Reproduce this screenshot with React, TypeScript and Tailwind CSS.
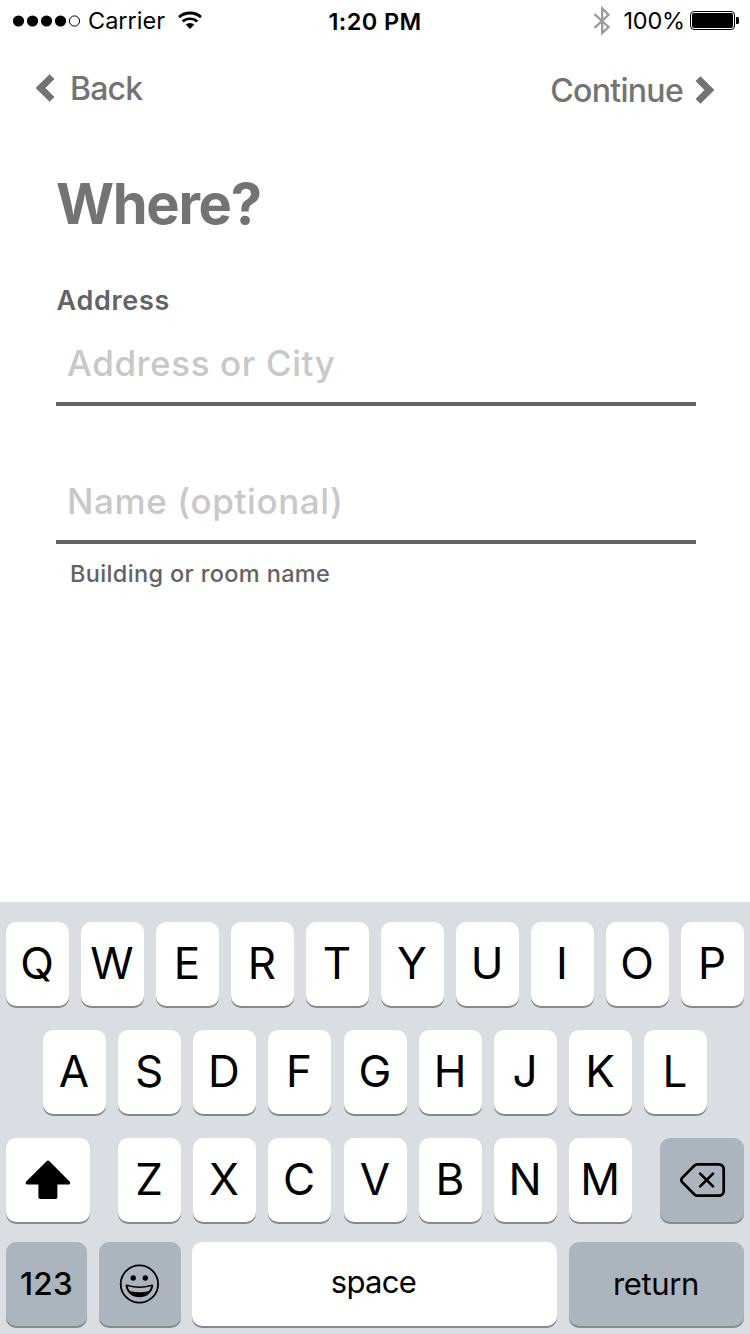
import type { ReactNode } from "react";

const rowOne = ["Q", "W", "E", "R", "T", "Y", "U", "I", "O", "P"];
const rowTwoLeft = ["A", "S", "D", "F"];
const rowTwoRight = ["G", "H", "J", "K", "L"];
const rowThreeLeft = ["Z", "X", "C"];
const rowThreeRight = ["V", "B", "N", "M"];

function Key({ children, className }: { children: ReactNode; className: string }) {
  return (
    <button
      type="button"
      className={`flex h-[84px] shrink-0 items-center justify-center rounded-[10px] shadow-[0_2px_0_#88898d] ${className}`}
    >
      {children}
    </button>
  );
}

function Letters({ letters }: { letters: string[] }) {
  return (
    <div className="flex gap-3">
      {letters.map((l) => (
        <Key key={l} className="w-[63px] bg-white pr-px pb-[2px] text-[44px] leading-none">
          {l}
        </Key>
      ))}
    </div>
  );
}

function StatusBar() {
  return (
    <div className="flex h-10 items-start justify-between pr-[11px] pl-3 text-black">
      <div className="flex h-[41px] w-[300px] items-center">
        <svg width="69" height="12" viewBox="0 0 69 12">
          <circle cx="6.5" cy="6" r="5.6" />
          <circle cx="20.5" cy="6" r="5.6" />
          <circle cx="34.5" cy="6" r="5.6" />
          <circle cx="48.5" cy="6" r="5.6" />
          <circle cx="62.5" cy="6" r="5.1" fill="none" stroke="#000" />
        </svg>
        <span className="ml-[7px] w-[90px] text-[23.5px] leading-none tracking-[0px]">Carrier</span>
        <svg width="26" height="20" viewBox="0 0 26 20" className="-mt-[1px]">
          <path d="M1 7.1A16.8 16.8 0 0 1 23 7.1" fill="none" stroke="#000" strokeWidth="2.8" />
          <path d="M4.7 11.6A10.8 10.8 0 0 1 19.3 11.6" fill="none" stroke="#000" strokeWidth="2.7" />
          <path d="M7.7 14.6A6.3 6.3 0 0 1 16.3 14.6L12 18.9Z" />
        </svg>
      </div>
      <span className="mr-[2px] flex h-[43px] items-center text-[23.5px] leading-none font-semibold tracking-[0.4px]">1:20 PM</span>
      <div className="flex h-[41px] w-[299px] items-center justify-end">
        <svg width="18" height="30" viewBox="0 0 18 30" className="mr-[13px]" fill="none" stroke="#9b9b9b" strokeWidth="2.3">
          <path d="M1.5 8.2L15.5 21L9.2 27V2.5L15.5 8.8L1.5 21.8" />
        </svg>
        <span className="mr-[5px] text-[23.5px] leading-none tracking-[-0.2px]">100%</span>
        <svg width="49" height="20" viewBox="0 0 49 20">
          <rect x="0.5" y="0.5" width="44" height="18" rx="3.5" fill="none" stroke="#000" />
          <rect x="2" y="2" width="41" height="15" rx="2" />
          <path d="M46 6h1.5q1.5 0 1.5 1.5v4q0 1.5-1.5 1.5H46Z" />
        </svg>
      </div>
    </div>
  );
}

export default function App() {
  return (
    <div className="flex h-[1334px] w-[750px] flex-col overflow-hidden bg-white font-['Inter',sans-serif] text-black">
      <StatusBar />
      <nav className="flex h-[100px] items-start justify-between pr-[35px] pl-[35px] text-[32px] leading-none font-medium text-[#737373]">
        <button type="button" className="flex h-[97px] items-center">
          <svg width="20" height="30" viewBox="0 0 20 30" className="mr-[15px] mb-[2px]" fill="none" stroke="#737373" strokeWidth="7">
            <path d="M17 3.6L5.6 15L17 26.4" />
          </svg>
          <span className="tracking-[-0.8px]">Back</span>
        </button>
        <button type="button" className="flex h-[101px] items-center">
          <span className="tracking-[-0.7px]">Continue</span>
          <svg width="20" height="30" viewBox="0 0 20 30" className="mb-[2px] ml-[12px]" fill="none" stroke="#737373" strokeWidth="7">
            <path d="M3 3.6L14.4 15L3 26.4" />
          </svg>
        </button>
      </nav>
      <main className="flex flex-1 flex-col pr-[54px] pl-14">
        <h1 className="mt-[34px] text-[56px] leading-[60px] font-bold tracking-[-1.3px] text-[#737373]">Where?</h1>
        <label className="mt-[47px] pl-[0.5px] text-[27px] leading-10 font-semibold tracking-[0.7px] text-[#636363]">Address</label>
        <div className="flex h-[85px] items-center border-b-4 border-[#636363] pt-[3px] pl-[11px]">
          <span className="text-[35px] leading-none font-[450] tracking-[0.6px] text-[#c8c8c8]">Address or City</span>
        </div>
        <div className="mt-[52px] flex h-[86px] items-center border-b-4 border-[#636363] pt-1 pl-[11px]">
          <span className="text-[35px] leading-none font-[450] tracking-[0.6px] text-[#c8c8c8]">Name (optional)</span>
        </div>
        <p className="mt-[14px] pl-[14px] text-[23.5px] leading-8 font-medium tracking-[0.36px] text-[#636363]">Building or room name</p>
      </main>
      <section className="flex h-[432px] shrink-0 flex-col bg-[#dadde2] px-1.5 pt-5">
        <Letters letters={rowOne} />
        <div className="mt-6 flex gap-[13px] pl-[37px]">
          <Letters letters={rowTwoLeft} />
          <Letters letters={rowTwoRight} />
        </div>
        <div className="mt-6 flex">
          <Key className="mr-7 w-[84px] bg-white">
            <svg width="46" height="40" viewBox="0 0 46 40">
              <path d="M21.6 1.2Q23 0 24.4 1.2L44.6 21.6Q46 24.3 43.6 24.6H32.4V37.2Q32.4 39 30.6 39H15.2Q13.4 39 13.4 37.2V24.6H2.2Q-.2 24.3 1.2 21.6Z" />
            </svg>
          </Key>
          <div className="flex gap-[13px]">
            <Letters letters={rowThreeLeft} />
            <Letters letters={rowThreeRight} />
          </div>
          <Key className="ml-7 w-[84px] bg-[#acb4be] pl-px">
            <svg width="46" height="36" viewBox="0 0 46 36" fill="none" stroke="#000" strokeWidth="2.7" strokeLinecap="round" strokeLinejoin="round">
              <path d="M17.5 2.3H38.5Q43.7 2.3 43.7 7.5V28.5Q43.7 33.7 38.5 33.7H17.5Q15.8 33.7 14.5 32.5L2.5 20.5Q.2 18 2.5 15.5L14.5 3.5Q15.8 2.3 17.5 2.3Z" />
              <path d="M20.2 11.6L33 24.4M33 11.6L20.2 24.4" />
            </svg>
          </Key>
        </div>
        <div className="mt-5 flex">
          <Key className="w-[81px] bg-[#acb4be] text-[31.5px] font-medium tracking-[0.2px]">123</Key>
          <Key className="ml-3 w-[82px] bg-[#acb4be] pr-[2px]">
            <svg width="40" height="40" viewBox="0 0 40 40" className="-mt-[1px]">
              <circle cx="20.4" cy="20" r="18.7" fill="none" stroke="#000" strokeWidth="1.8" />
              <circle cx="14.2" cy="14" r="2.7" />
              <circle cx="26.3" cy="14" r="2.7" />
              <path d="M7.8 20.5Q20.4 24.5 33 20.5Q34.4 20.3 34.2 22.2C32.6 29.3 27.4 33.2 20.4 33.2S8.2 29.3 6.6 22.2Q6.4 20.3 7.8 20.5Z" />
              <path d="M8.6 22.2Q20.4 25.8 32.2 22.2Q31.6 25.2 29.6 27.2Q20.4 29.4 11.2 27.2Q9.2 25.2 8.6 22.2Z" fill="#acb4be" />
            </svg>
          </Key>
          <Key className="ml-[11px] w-[365px] bg-white pr-[2px] pb-1 text-[31px] tracking-[-0.7px]">space</Key>
          <Key className="ml-3 w-[175px] bg-[#acb4be] pr-px text-[31px] tracking-[-0.4px]">return</Key>
        </div>
      </section>
    </div>
  );
}
